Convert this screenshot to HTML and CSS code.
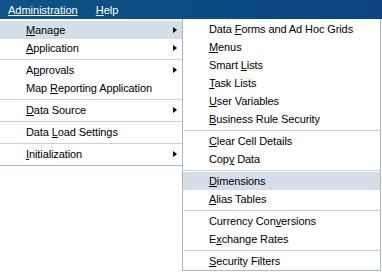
FILE: index.html
```html
<!DOCTYPE html>
<html lang="en">
<head>
    <meta charset="UTF-8">
    <title>Administration Menu</title>
    <link rel="stylesheet" href="styles.css">
</head>
<body>
    <div class="menubar">
        <span class="menubar-item active">Administration</span>
        <span class="menubar-item"><u>H</u>elp</span>
    </div>
    <div class="menus">
        <ul class="menu main-menu">
            <li class="item has-sub selected"><span><u>M</u>anage</span></li>
            <li class="item has-sub"><span><u>A</u>pplication</span></li>
            <li class="sep"></li>
            <li class="item has-sub"><span>A<u>p</u>provals</span></li>
            <li class="item"><span>Map <u>R</u>eporting Application</span></li>
            <li class="sep"></li>
            <li class="item has-sub"><span><u>D</u>ata Source</span></li>
            <li class="sep"></li>
            <li class="item"><span>Data <u>L</u>oad Settings</span></li>
            <li class="sep"></li>
            <li class="item has-sub"><span><u>I</u>nitialization</span></li>
        </ul>
        <ul class="menu submenu">
            <li class="item"><span>Data <u>F</u>orms and Ad Hoc Grids</span></li>
            <li class="item"><span><u>M</u>enus</span></li>
            <li class="item"><span>Smart <u>L</u>ists</span></li>
            <li class="item"><span><u>T</u>ask Lists</span></li>
            <li class="item"><span><u>U</u>ser Variables</span></li>
            <li class="item"><span><u>B</u>usiness Rule Security</span></li>
            <li class="sep"></li>
            <li class="item"><span><u>C</u>lear Cell Details</span></li>
            <li class="item"><span>Cop<u>y</u> Data</span></li>
            <li class="sep"></li>
            <li class="item selected"><span><u>D</u>imensions</span></li>
            <li class="item"><span><u>A</u>lias Tables</span></li>
            <li class="sep"></li>
            <li class="item"><span>Currency Con<u>v</u>ersions</span></li>
            <li class="item"><span>E<u>x</u>change Rates</span></li>
            <li class="sep"></li>
            <li class="item"><span><u>S</u>ecurity Filters</span></li>
        </ul>
    </div>
</body>
</html>
```

FILE: styles.css
```css
* {
    margin: 0;
    padding: 0;
    box-sizing: border-box;
}
body {
    font-family: 'Liberation Sans', Arial, sans-serif;
    font-size: 11px;
    color: #000;
    background: #fff;
}
.menubar {
    display: flex;
    align-items: center;
    gap: 18px;
    height: 19px;
    padding-left: 8px;
    background: linear-gradient(90deg, #0e5486, #0d4383);
    color: #fff;
}
.menubar-item.active {
    text-decoration: underline;
}
.menus {
    display: flex;
    align-items: flex-start;
}
.menu {
    list-style: none;
}
.main-menu {
    width: 182px;
    padding: 2px 0;
    border-bottom: 1px solid #a9b8cf;
}
.submenu {
    width: 199px;
    padding: 1px 0 0;
    border: 1px solid #a9b8cf;
    border-top: none;
}
.item {
    display: flex;
    align-items: center;
    height: 18px;
    padding: 0 5px 0 26px;
    white-space: nowrap;
    letter-spacing: -0.1px;
}
.item.selected {
    background: #d4dee8;
}
.has-sub::after {
    content: "";
    margin-left: auto;
    border-left: 4px solid #000;
    border-top: 3px solid transparent;
    border-bottom: 3px solid transparent;
}
.sep {
    height: 1px;
    margin: 2px 0 1px;
    background: #c6d1dd;
}
```
